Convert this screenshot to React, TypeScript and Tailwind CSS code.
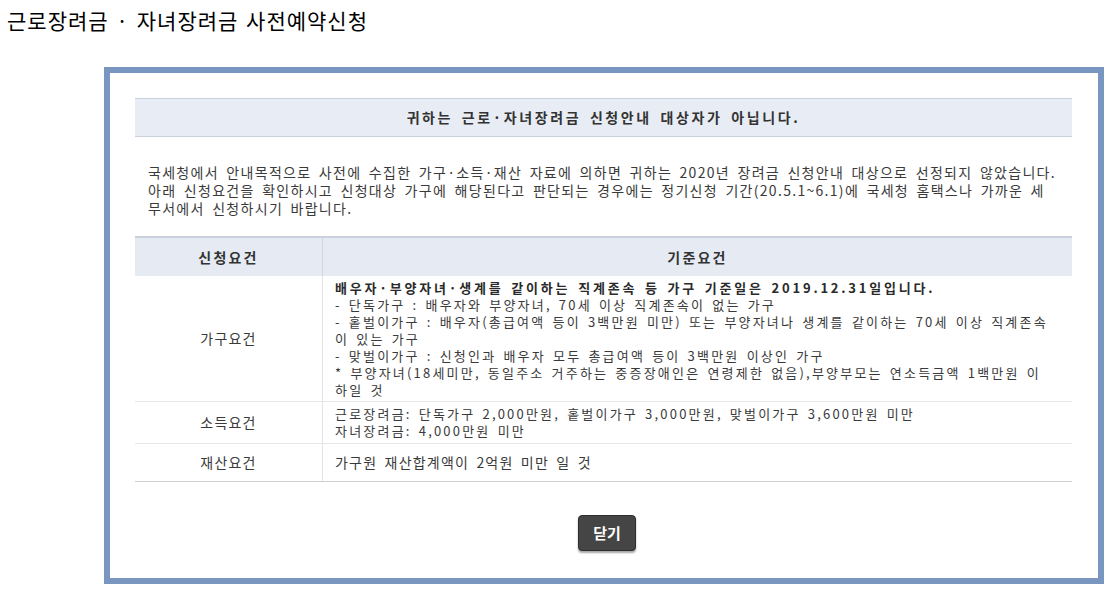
const font = { fontFamily: '"Noto Sans CJK KR", "Noto Sans", sans-serif' };

export default function App() {
  return (
    <div className="min-h-[594px] bg-white text-[#333]" style={font}>
      <div className="pl-[7px] pt-[7px] text-[21px] leading-[27px] text-black tracking-[1px] [word-spacing:2px]">
        근로장려금 · 자녀장려금 사전예약신청
      </div>

      <div className="ml-[104px] mt-[33px] w-[1000px] border-[6px] border-[#7896c0] bg-white pl-[25px] pr-[26px] pt-[25px] pb-[27px]">
        <div className="flex h-[39px] items-center justify-center border-y border-[#c8d0dc] bg-[#e8edf5] text-[14px] font-bold text-[#333] tracking-[2.6px] [word-spacing:3px]">
          귀하는 근로·자녀장려금 신청안내 대상자가 아닙니다.
        </div>

        <p className="mt-[26px] px-[13px] text-[14px] leading-[18px] text-[#3a3a3a] tracking-[1.3px] [word-spacing:3px] whitespace-nowrap">
          국세청에서 안내목적으로 사전에 수집한 가구·소득·재산 자료에 의하면 귀하는 2020년 장려금 신청안내 대상으로 선정되지 않았습니다.
          <br />
          아래 신청요건을 확인하시고 신청대상 가구에 해당된다고 판단되는 경우에는 정기신청 기간(20.5.1~6.1)에 국세청 홈택스나 가까운 세
          <br />
          무서에서 신청하시기 바랍니다.
        </p>

        <div className="mt-[19px] border-b border-[#cfcfcf] text-[13px] leading-[17px]">
          <div className="grid grid-cols-[188px_1fr] border-t-2 border-[#c9d1dc] bg-[#e6ebf3] text-[14px] font-bold text-[#333] tracking-[2.2px]">
            <div className="flex h-[38px] items-center justify-center border-r border-[#cfd6e0]">신청요건</div>
            <div className="flex h-[38px] items-center justify-center">기준요건</div>
          </div>

          <div className="grid grid-cols-[188px_1fr] border-b border-[#e6e6e6]">
            <div className="flex items-center justify-center border-r border-[#e3e3e3] text-[14px] tracking-[1.2px] text-[#3a3a3a]">가구요건</div>
            <div className="pl-[12px] pt-[3px] pb-[3px] whitespace-nowrap text-[#3a3a3a] tracking-[2.2px] [word-spacing:2px]">
              <div className="font-bold text-[#2a2a2a] tracking-[2.8px]">
                배우자·부양자녀·생계를 같이하는 직계존속 등 가구 기준일은 2019.12.31일입니다.
              </div>
              <div>- 단독가구 : 배우자와 부양자녀, 70세 이상 직계존속이 없는 가구</div>
              <div>- 홑벌이가구 : 배우자(총급여액 등이 3백만원 미만) 또는 부양자녀나 생계를 같이하는 70세 이상 직계존속</div>
              <div>이 있는 가구</div>
              <div>- 맞벌이가구 : 신청인과 배우자 모두 총급여액 등이 3백만원 이상인 가구</div>
              <div>* 부양자녀(18세미만, 동일주소 거주하는 중증장애인은 연령제한 없음),부양부모는 연소득금액 1백만원 이</div>
              <div>하일 것</div>
            </div>
          </div>

          <div className="grid grid-cols-[188px_1fr] border-b border-[#e6e6e6]">
            <div className="flex items-center justify-center border-r border-[#e3e3e3] text-[14px] tracking-[1.2px] text-[#3a3a3a]">소득요건</div>
            <div className="pl-[12px] pt-[3px] pb-[4px] whitespace-nowrap text-[#3a3a3a] tracking-[2.2px] [word-spacing:2px]">
              <div>근로장려금: 단독가구 2,000만원, 홑벌이가구 3,000만원, 맞벌이가구 3,600만원 미만</div>
              <div>자녀장려금: 4,000만원 미만</div>
            </div>
          </div>

          <div className="grid grid-cols-[188px_1fr]">
            <div className="flex items-center justify-center border-r border-[#e3e3e3] text-[14px] tracking-[1.2px] text-[#3a3a3a]">재산요건</div>
            <div className="pl-[12px] py-[10px] whitespace-nowrap text-[14px] text-[#3a3a3a] tracking-[1.2px] [word-spacing:3px]">
              가구원 재산합계액이 2억원 미만 일 것
            </div>
          </div>
        </div>

        <div className="mt-[33px] flex justify-center">
          <button className="ml-[7px] h-[36px] w-[58px] rounded-[4px] border border-[#2e2e2e] bg-[#454545] text-[15px] font-bold text-white shadow-[0_2px_2px_rgba(0,0,0,0.35)]">
            닫기
          </button>
        </div>
      </div>
    </div>
  );
}
